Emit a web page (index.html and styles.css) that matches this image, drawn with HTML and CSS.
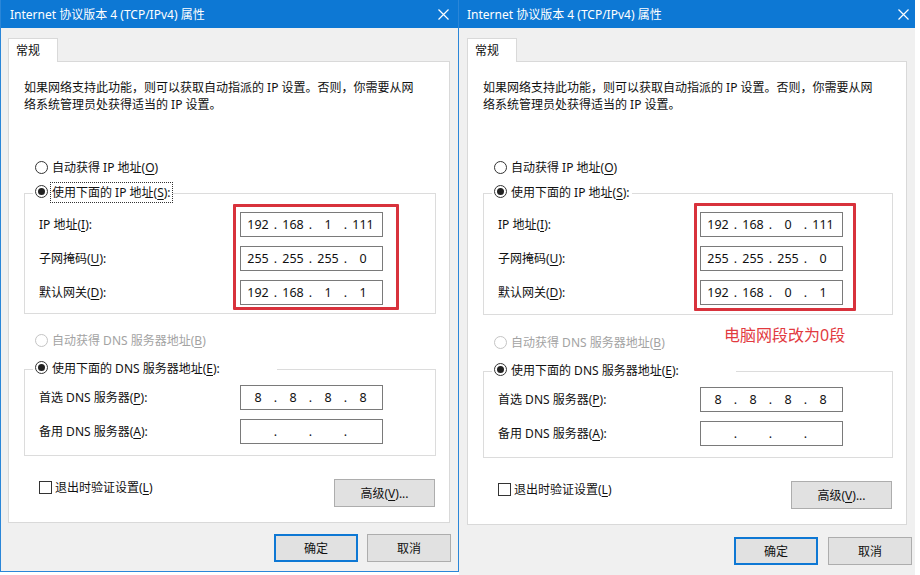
FILE: index.html
```html
<!DOCTYPE html>
<html lang="zh-CN">
<head>
<meta charset="utf-8">
<title>Internet 协议版本 4 (TCP/IPv4) 属性</title>
<link rel="stylesheet" href="styles.css">
</head>
<body>
<div class="dialog dialog-left">
  <div class="titlebar">
    <span class="title">Internet 协议版本 4 (TCP/IPv4) 属性</span>
    <svg class="close" width="11" height="11" viewBox="0 0 11 11"><path d="M0.5 0.5 L10.5 10.5 M10.5 0.5 L0.5 10.5" stroke="#fff" stroke-width="1.2" fill="none"/></svg>
  </div>
  <div class="tabs"><div class="tab">常规</div></div>
  <div class="panel">
    <p class="desc">如果网络支持此功能，则可以获取自动指派的 IP 设置。否则，你需要从网<br>络系统管理员处获得适当的 IP 设置。</p>
    <div class="option opt-ip-auto"><span class="radio"></span><span class="opt-text">自动获得 IP 地址(<u>O</u>)</span></div>
    <fieldset class="group group-ip">
      <legend class="legend legend-ip"><span class="radio checked"></span><span class="opt-text focus">使用下面的 IP 地址(<u>S</u>):</span></legend>
      <div class="rows">
        <div class="row"><span class="label">IP 地址(<u>I</u>):</span><div class="ipbox"><span class="seg">192</span><span class="dot">.</span><span class="seg">168</span><span class="dot">.</span><span class="seg">1</span><span class="dot">.</span><span class="seg">111</span></div></div>
        <div class="row"><span class="label">子网掩码(<u>U</u>):</span><div class="ipbox"><span class="seg">255</span><span class="dot">.</span><span class="seg">255</span><span class="dot">.</span><span class="seg">255</span><span class="dot">.</span><span class="seg">0</span></div></div>
        <div class="row"><span class="label">默认网关(<u>D</u>):</span><div class="ipbox"><span class="seg">192</span><span class="dot">.</span><span class="seg">168</span><span class="dot">.</span><span class="seg">1</span><span class="dot">.</span><span class="seg">1</span></div></div>
        <div class="highlight"></div>
      </div>
    </fieldset>
    <div class="option opt-dns-auto disabled"><span class="radio"></span><span class="opt-text">自动获得 DNS 服务器地址(<u>B</u>)</span></div>
    <fieldset class="group group-dns">
      <legend class="legend legend-dns"><span class="radio checked"></span><span class="opt-text">使用下面的 DNS 服务器地址(<u>E</u>):</span></legend>
      <div class="rows">
        <div class="row"><span class="label">首选 DNS 服务器(<u>P</u>):</span><div class="ipbox"><span class="seg">8</span><span class="dot">.</span><span class="seg">8</span><span class="dot">.</span><span class="seg">8</span><span class="dot">.</span><span class="seg">8</span></div></div>
        <div class="row"><span class="label">备用 DNS 服务器(<u>A</u>):</span><div class="ipbox"><span class="seg"></span><span class="dot">.</span><span class="seg"></span><span class="dot">.</span><span class="seg"></span><span class="dot">.</span><span class="seg"></span></div></div>
      </div>
    </fieldset>
    <div class="panel-foot">
      <div class="check-opt"><span class="checkbox"></span><span>退出时验证设置(<u>L</u>)</span></div>
      <button class="btn btn-adv">高级(<u>V</u>)...</button>
    </div>
  </div>
  <div class="footer">
    <button class="btn btn-default">确定</button>
    <button class="btn">取消</button>
  </div>
</div>

<div class="dialog dialog-right">
  <div class="titlebar">
    <span class="title">Internet 协议版本 4 (TCP/IPv4) 属性</span>
    <svg class="close" width="11" height="11" viewBox="0 0 11 11"><path d="M0.5 0.5 L10.5 10.5 M10.5 0.5 L0.5 10.5" stroke="#fff" stroke-width="1.2" fill="none"/></svg>
  </div>
  <div class="tabs"><div class="tab">常规</div></div>
  <div class="panel">
    <p class="desc">如果网络支持此功能，则可以获取自动指派的 IP 设置。否则，你需要从网<br>络系统管理员处获得适当的 IP 设置。</p>
    <div class="option opt-ip-auto"><span class="radio"></span><span class="opt-text">自动获得 IP 地址(<u>O</u>)</span></div>
    <fieldset class="group group-ip">
      <legend class="legend legend-ip"><span class="radio checked"></span><span class="opt-text">使用下面的 IP 地址(<u>S</u>):</span></legend>
      <div class="rows">
        <div class="row"><span class="label">IP 地址(<u>I</u>):</span><div class="ipbox"><span class="seg">192</span><span class="dot">.</span><span class="seg">168</span><span class="dot">.</span><span class="seg">0</span><span class="dot">.</span><span class="seg">111</span></div></div>
        <div class="row"><span class="label">子网掩码(<u>U</u>):</span><div class="ipbox"><span class="seg">255</span><span class="dot">.</span><span class="seg">255</span><span class="dot">.</span><span class="seg">255</span><span class="dot">.</span><span class="seg">0</span></div></div>
        <div class="row"><span class="label">默认网关(<u>D</u>):</span><div class="ipbox"><span class="seg">192</span><span class="dot">.</span><span class="seg">168</span><span class="dot">.</span><span class="seg">0</span><span class="dot">.</span><span class="seg">1</span></div></div>
        <div class="highlight"></div>
      </div>
    </fieldset>
    <div class="option opt-dns-auto disabled"><span class="radio"></span><span class="opt-text">自动获得 DNS 服务器地址(<u>B</u>)</span></div>
    <fieldset class="group group-dns">
      <legend class="legend legend-dns"><span class="radio checked"></span><span class="opt-text">使用下面的 DNS 服务器地址(<u>E</u>):</span></legend>
      <div class="rows">
        <div class="row"><span class="label">首选 DNS 服务器(<u>P</u>):</span><div class="ipbox"><span class="seg">8</span><span class="dot">.</span><span class="seg">8</span><span class="dot">.</span><span class="seg">8</span><span class="dot">.</span><span class="seg">8</span></div></div>
        <div class="row"><span class="label">备用 DNS 服务器(<u>A</u>):</span><div class="ipbox"><span class="seg"></span><span class="dot">.</span><span class="seg"></span><span class="dot">.</span><span class="seg"></span><span class="dot">.</span><span class="seg"></span></div></div>
      </div>
    </fieldset>
    <div class="panel-foot">
      <div class="check-opt"><span class="checkbox"></span><span>退出时验证设置(<u>L</u>)</span></div>
      <button class="btn btn-adv">高级(<u>V</u>)...</button>
    </div>
    <div class="annotation">电脑网段改为0段</div>
  </div>
  <div class="footer">
    <button class="btn btn-default">确定</button>
    <button class="btn">取消</button>
  </div>
</div>
</body>
</html>
```
FILE: styles.css
```css
* { box-sizing: border-box; }
html, body { margin: 0; padding: 0; }
body {
  width: 920px;
  height: 575px;
  overflow: hidden;
  background: #ffffff;
  display: flex;
  align-items: flex-start;
  font-family: "Noto Sans", "Noto Sans CJK SC", sans-serif;
  font-size: 12px;
  line-height: 17px;
  color: #111;
}
u { text-decoration: underline; text-underline-offset: 2px; }

.dialog {
  display: flex;
  flex-direction: column;
  background: #f0f0f0;
  flex: none;
}
.dialog-left {
  width: 459px;
  height: 572px;
  border: 1px solid #2a86d8;
  border-top: 0;
}
.dialog-right {
  width: 456px;
  height: 575px;
}

.titlebar {
  height: 28px;
  background: #0d78d4;
  color: #fff;
  display: flex;
  align-items: center;
  justify-content: space-between;
  padding: 0 9px 0 9px;
  flex: none;
}
.dialog-right .titlebar { padding: 0 6px 0 8px; }
.title { font-size: 12px; line-height: 17px; }
.close { display: block; }

.tabs {
  display: flex;
  margin: 10px 8px 0 7px;
  position: relative;
  z-index: 1;
}
.dialog-right .tabs { margin-left: 8px; }
.tab {
  width: 50px;
  height: 24px;
  background: #fff;
  border: 1px solid #d9d9d9;
  border-bottom: 0;
  padding: 3px 0 0 7px;
}

.panel {
  position: relative;
  margin: -1px 8px 0 7px;
  background: #fff;
  border: 1px solid #d9d9d9;
  padding: 17px 13px 15px 15px;
}
.dialog-right .panel { margin-left: 8px; }

.desc { margin: 0; }

.option {
  display: flex;
  align-items: center;
  padding-left: 11px;
  height: 17px;
}
.opt-ip-auto { margin-top: 46px; }
.opt-dns-auto { margin-top: 18px; }
.dialog-right .opt-dns-auto { margin-top: 19px; }
.disabled { color: #a3a3a3; }

.radio {
  width: 13px;
  height: 13px;
  border: 1px solid #333;
  border-radius: 50%;
  background: #fff;
  flex: none;
  display: flex;
  align-items: center;
  justify-content: center;
  margin-right: 3px;
}
.radio.checked::after {
  content: "";
  width: 7px;
  height: 7px;
  border-radius: 50%;
  background: #222;
}
.disabled .radio { border-color: #c4c4c4; }

.opt-text { padding: 1px 1px; line-height: 17px; }
.focus { outline: 1px dotted #333; outline-offset: 0; }

.group {
  margin: 0;
  border: 1px solid #dcdcdc;
  padding: 9px 52px 8px 14px;
  min-width: 0;
}
.dialog-right .group { padding-right: 49px; }
.group-ip { margin-top: 7px; }
.dialog-right .group-ip { padding-bottom: 9px; }
.group-dns { margin-top: 10px; padding-top: 6px; padding-bottom: 11px; }
.legend {
  display: flex;
  align-items: flex-start;
  padding: 0 0 3px 0;
  margin-left: -6px;
  height: 20px;
  background: #fff;
}
.legend .radio { margin-top: 2px; margin-left: 2px; }
.legend-ip { width: 140px; }
.legend-dns { width: 244px; }

.rows {
  position: relative;
  display: flex;
  flex-direction: column;
  gap: 9px;
}
.row {
  display: flex;
  align-items: center;
  justify-content: space-between;
  height: 25px;
}
.ipbox {
  width: 143px;
  height: 25px;
  border: 1px solid #7a7a7a;
  background: #fff;
  display: flex;
  align-items: center;
  padding: 0 3px;
  font-size: 12.5px;
}
.seg { width: 28px; text-align: center; }
.dot { width: 7px; text-align: center; }

.highlight {
  position: absolute;
  left: 194px;
  top: -8px;
  width: 166px;
  height: 106px;
  border: 3px solid #d8323c;
  border-radius: 1px;
  pointer-events: none;
}
.dialog-right .highlight { left: 196px; top: -9px; width: 162px; height: 108px; }

.panel-foot {
  display: flex;
  justify-content: space-between;
  align-items: flex-start;
  margin-top: 23px;
  padding-left: 15px;
  padding-right: 1px;
}
.check-opt {
  display: flex;
  align-items: center;
  height: 17px;
}
.checkbox {
  width: 13px;
  height: 13px;
  border: 1px solid #333;
  background: #fff;
  margin-right: 3px;
}

.btn {
  font-family: inherit;
  font-size: 12px;
  line-height: 17px;
  color: #111;
  background: #e1e1e1;
  border: 1px solid #adadad;
  height: 28px;
  padding: 0;
  margin: 0;
}
.btn-adv { width: 101px; }

.footer {
  display: flex;
  justify-content: flex-end;
  gap: 9px;
  margin-top: 11px;
  padding-right: 7px;
}
.dialog-right .footer { margin-top: 12px; padding-right: 3px; gap: 10px; }
.footer .btn { width: 84px; }
.btn-default { border: 2px solid #0e78d4; }

.annotation {
  position: absolute;
  left: 256px;
  top: 262px;
  font-size: 16px;
  line-height: 22px;
  color: #e23a3f;
}
```
